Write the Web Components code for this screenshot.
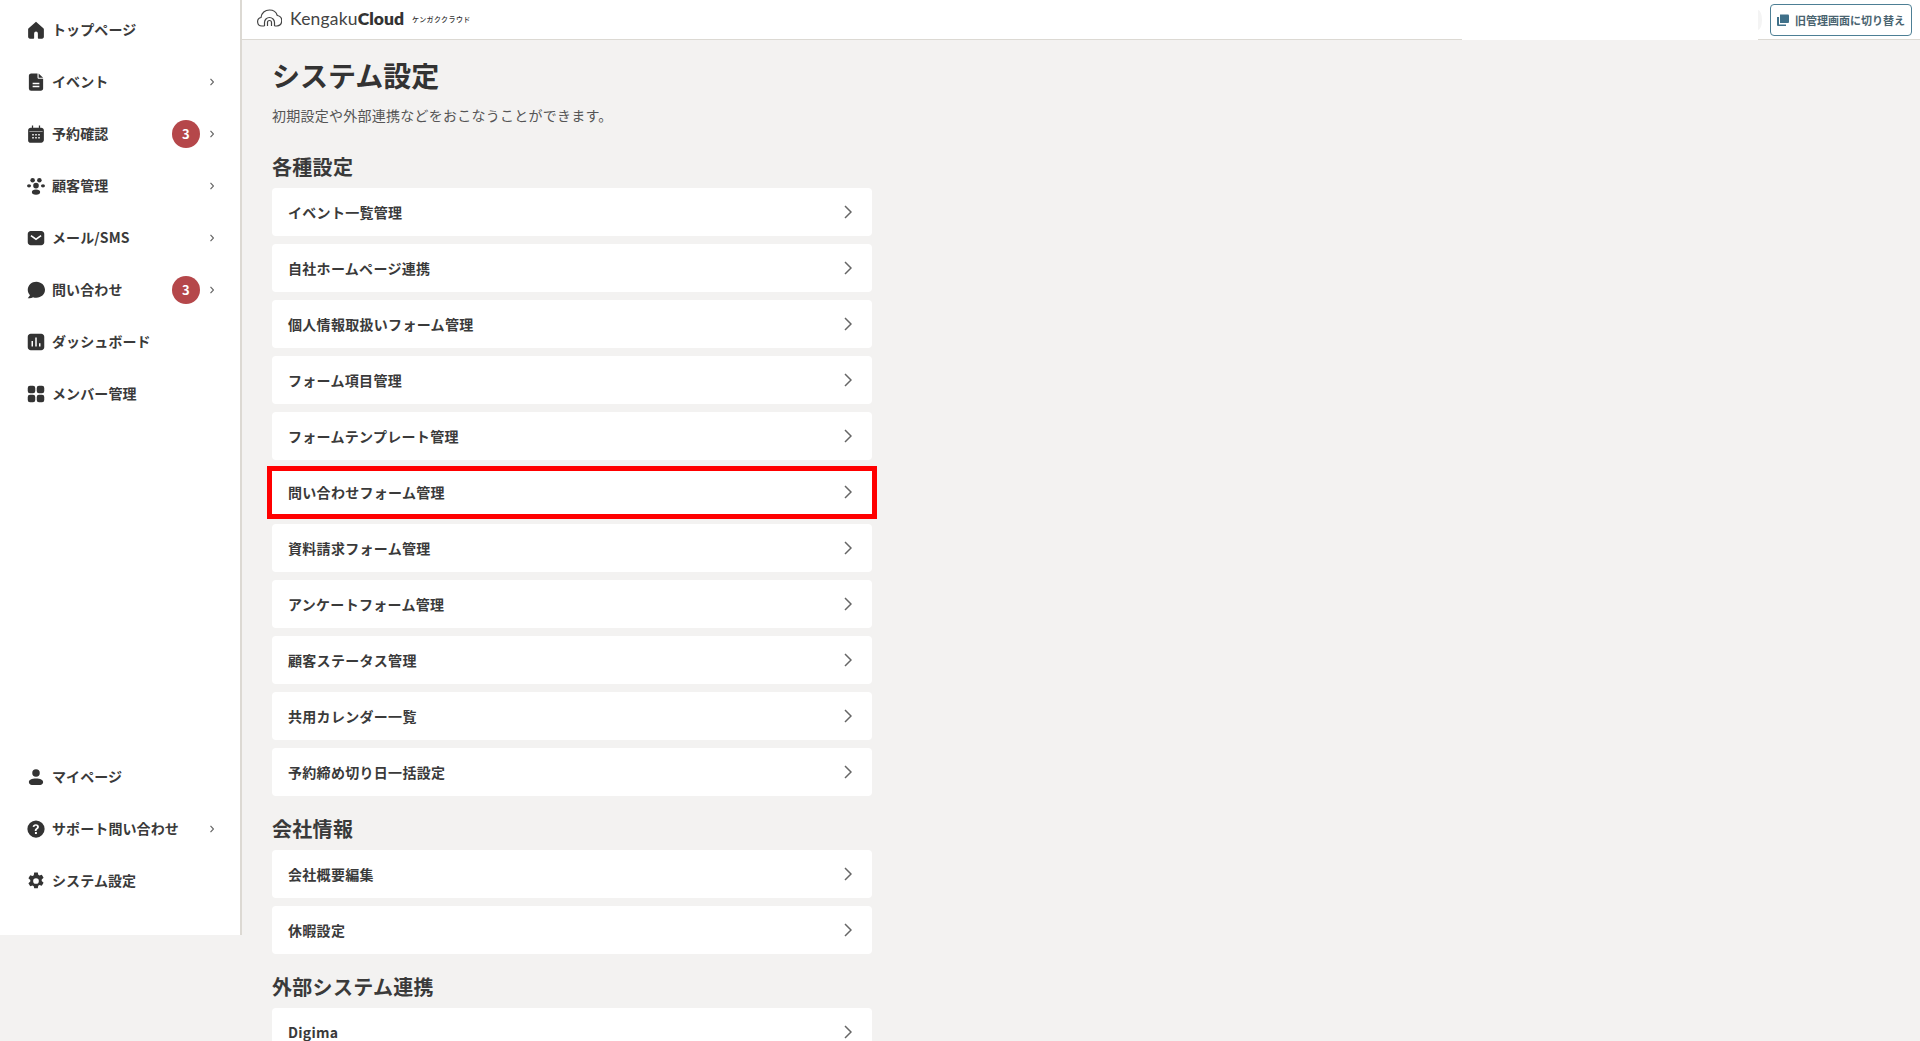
<!DOCTYPE html>
<html lang="ja">
<head>
<meta charset="utf-8">
<title>システム設定</title>
<style>
    html, body { margin: 0; height: 100%; overflow: hidden; background: #f3f2f1; }
    body { font-family: "Noto Sans CJK JP", "Noto Sans", sans-serif; color: #333; }
</style>
</head>
<body>
<kc-app>
    <kc-sidebar slot="side">
        <kc-nav icon="home">トップページ</kc-nav>
        <kc-nav icon="doc" arrow>イベント</kc-nav>
        <kc-nav icon="cal" badge="3" arrow>予約確認</kc-nav>
        <kc-nav icon="people" arrow>顧客管理</kc-nav>
        <kc-nav icon="mail" arrow>メール/SMS</kc-nav>
        <kc-nav icon="chat" badge="3" arrow>問い合わせ</kc-nav>
        <kc-nav icon="chart">ダッシュボード</kc-nav>
        <kc-nav icon="grid">メンバー管理</kc-nav>
        <kc-nav icon="user" slot="bottom">マイページ</kc-nav>
        <kc-nav icon="help" arrow slot="bottom">サポート問い合わせ</kc-nav>
        <kc-nav icon="gear" slot="bottom">システム設定</kc-nav>
    </kc-sidebar>
    <kc-header slot="top"></kc-header>
    <kc-page title="システム設定" lead="初期設定や外部連携などをおこなうことができます。">
        <kc-section heading="各種設定">
            <kc-link>イベント一覧管理</kc-link>
            <kc-link>自社ホームページ連携</kc-link>
            <kc-link>個人情報取扱いフォーム管理</kc-link>
            <kc-link>フォーム項目管理</kc-link>
            <kc-link>フォームテンプレート管理</kc-link>
            <kc-link marked>問い合わせフォーム管理</kc-link>
            <kc-link>資料請求フォーム管理</kc-link>
            <kc-link>アンケートフォーム管理</kc-link>
            <kc-link>顧客ステータス管理</kc-link>
            <kc-link>共用カレンダー一覧</kc-link>
            <kc-link>予約締め切り日一括設定</kc-link>
        </kc-section>
        <kc-section heading="会社情報">
            <kc-link>会社概要編集</kc-link>
            <kc-link>休暇設定</kc-link>
        </kc-section>
        <kc-section heading="外部システム連携">
            <kc-link>Digima</kc-link>
        </kc-section>
    </kc-page>
</kc-app>

<script>
const ICONS = {
    home: '<path d="M12 1 2.200 9.500c-.6.5-.7 1-.7 1.500v10c0 1.500 1 2.500 2.500 2.500h4.500c.6 0 1-.4 1-1v-6a2.500 2.500 0 0 1 5 0v6c0 .6.4 1 1 1H20c1.500 0 2.500-1 2.500-2.500V11c0-.5-.1-1-.7-1.500z"/>',
    doc: '<path fill-rule="evenodd" d="M5.500 .5H14V6c0 1 .8 1.800 1.800 1.800h5.700V20.500c0 1.700-1.300 3-3 3h-13a3 3 0 0 1-3-3v-17c0-1.700 1.300-3 3-3zM7.500 13v2h9v-2zm0 4v2h9v-2z"/><path d="M15.500 .5 21.500 6.300h-6z"/>',
    cal: '<path fill-rule="evenodd" d="M6.500 .5h1.700v3h7.600v-3h1.700v3h1.500c1.900 0 3.500 1.500 3.500 3.500v13c0 1.900-1.600 3.500-3.500 3.500h-13C3.100 24 1.500 22.400 1.500 20.500V7C1.500 5 3.100 3.500 5 3.500h1.500zM3.200 8v.8h17.600V8zM7 12v2h2v-2zm4 0v2h2v-2zm4 0v2h2v-2zM7 16v2h2v-2zm4 0v2h2v-2zm4 0v2h2v-2z"/>',
    people: '<circle cx="7.500" cy="4.200" r="3"/><circle cx="16.500" cy="4.200" r="3"/><ellipse cx="2.700" cy="11.800" rx="2.700" ry="2.200"/><ellipse cx="21.300" cy="11.800" rx="2.700" ry="2.200"/><circle cx="12" cy="11.500" r="3.700"/><ellipse cx="12" cy="20" rx="5.500" ry="3.500"/>',
    mail: '<path fill-rule="evenodd" d="M5 2.500h14c2.200 0 4 1.800 4 4v11c0 2.200-1.800 4-4 4H5c-2.200 0-4-1.800-4-4v-11c0-2.200 1.800-4 4-4zm.9 5.500L4.600 9.800 12 15l7.400-5.200L18.100 8 12 12.300z"/>',
    chat: '<path d="M12.500 1C6.100 1 1 5.700 1 11.800c0 2.800 1.100 5.300 3 7.200L1 23c2.800.2 5.300-.3 7-1.400 1.400.5 2.900.7 4.500.7 6.400 0 11.500-4.500 11.500-10.500S18.900 1 12.500 1z"/>',
    chart: '<path fill-rule="evenodd" d="M5 1h14c2.200 0 4 1.800 4 4v14c0 2.200-1.800 4-4 4H5c-2.200 0-4-1.800-4-4V5c0-2.200 1.800-4 4-4zm6 5v12h2V6zm-5 4.500V18h2v-7.500zm10 3V18h2v-4.500z"/>',
    grid: '<rect x="1" y="1" width="10" height="10" rx="3"/><rect x="13" y="1" width="10" height="10" rx="3"/><rect x="1" y="13" width="10" height="10" rx="3"/><rect x="13" y="13" width="10" height="10" rx="3"/>',
    user: '<circle cx="12" cy="6.500" r="5"/><path d="M12 14c-5.800 0-9.500 1.800-9.500 4.700 0 2.300 1.700 3.800 4 3.800h11c2.300 0 4-1.500 4-3.800 0-2.900-3.700-4.700-9.500-4.700z"/>',
    help: '<path fill-rule="evenodd" d="M12 .5a11.500 11.500 0 1 1 0 23 11.500 11.500 0 0 1 0-23zm-.2 5c-2.500 0-4 1.300-4.300 3.500l2.300.3c.2-1.100.9-1.700 1.900-1.700s1.700.6 1.700 1.500c0 .8-.4 1.200-1.300 1.900-1.200.9-1.700 1.700-1.700 3v.6h2.300v-.4c0-.8.300-1.200 1.200-1.900 1.300-1 2-1.900 2-3.400 0-2.200-1.700-3.400-4.100-3.400zM10.600 16v2.500h2.600V16z"/>',
    gear: '<path fill-rule="evenodd" d="M9.600.5h4.800l.6 3.200 1.600.9 3.100-1 2.400 4.100-2.500 2.200v2.200l2.500 2.200-2.400 4.100-3.100-1-1.600.9-.6 3.200H9.600L9 18.900l-1.600-.9-3.100 1-2.400-4.100 2.500-2.200v-2.200L1.900 8.300l2.400-4.100 3.100 1L9 4.300zM12 8.200a3.800 3.800 0 1 0 0 7.600 3.800 3.800 0 0 0 0-7.600z"/>'
};

class KcApp extends HTMLElement {
    constructor() {
        super();
        this.attachShadow({ mode: 'open' }).innerHTML = `
            <style>
                :host { display: flex; align-items: flex-start; height: 100vh; overflow: hidden; }
                .right { flex: 1; min-width: 0; height: 100vh; overflow: hidden; }
            </style>
            <slot name="side"></slot>
            <div class="right">
                <slot name="top"></slot>
                <slot></slot>
            </div>
        `;
    }
}

class KcSidebar extends HTMLElement {
    constructor() {
        super();
        this.attachShadow({ mode: 'open' }).innerHTML = `
            <style>
                :host {
                    display: flex;
                    flex-direction: column;
                    justify-content: space-between;
                    box-sizing: border-box;
                    width: 242px;
                    flex: none;
                    height: 935px;
                    padding: 3px 0 29px;
                    background: #fff;
                    border-right: 2px solid #dcd9d3;
                }
                nav { display: flex; flex-direction: column; }
            </style>
            <nav><slot></slot></nav>
            <nav><slot name="bottom"></slot></nav>
        `;
    }
}

class KcNav extends HTMLElement {
    constructor() {
        super();
        const badge = this.getAttribute('badge');
        const arrow = this.hasAttribute('arrow');
        this.attachShadow({ mode: 'open' }).innerHTML = `
            <style>
                :host {
                    display: flex;
                    align-items: center;
                    height: 52px;
                    padding: 0 26px 0 27px;
                    font-size: 14px;
                    font-weight: 700;
                    letter-spacing: 0.1px;
                    color: #3a3a3a;
                }
                svg.icon { width: 18px; height: 18px; fill: #333; flex: none; margin: 2px 7px 0 0; }
                .label { flex: 1; white-space: nowrap; }
                .badge {
                    width: 28px; height: 28px; border-radius: 50%;
                    background: #b5474a; color: #fff;
                    display: flex; align-items: center; justify-content: center;
                    font-size: 13px; font-weight: 700; margin: 1px 10px 0 0;
                }
                svg.arrow { width: 4px; height: 8px; margin-top: 1px; fill: none; stroke: #666; stroke-width: 1.200; }
            </style>
            <svg class="icon" viewBox="0 0 24 24">${ICONS[this.getAttribute('icon')]}</svg>
            <span class="label"><slot></slot></span>
            ${badge ? `<span class="badge">${badge}</span>` : ''}
            ${arrow ? '<svg class="arrow" viewBox="0 0 4 8"><path d="M.5 .8l3 3.200-3 3.200"/></svg>' : ''}
        `;
    }
}

class KcHeader extends HTMLElement {
    constructor() {
        super();
        this.attachShadow({ mode: 'open' }).innerHTML = `
            <style>
                :host {
                    display: flex;
                    align-items: center;
                    position: relative;
                    box-sizing: border-box;
                    height: 40px;
                    padding: 0 8px 0 15px;
                    background: #fff;
                    border-bottom: 1px solid #dcd9d3;
                }
                .logo { display: flex; align-items: center; flex: 1; margin-top: -2px; }
                .logo svg { width: 25px; height: 18px; margin: -2px 8px 0 0; fill: none; stroke: #444; stroke-width: 1.200; }
                .name { font-family: Lato, "Noto Sans", sans-serif; font-size: 17.500px; letter-spacing: 0.2px; color: #444; font-weight: 400; }
                .name b { font-weight: 800; color: #333; letter-spacing: 0; }
                .kana { font-size: 7px; font-weight: 500; letter-spacing: 0.400px; margin-left: 8px; color: #333; }
                .patch {
                    position: absolute; top: 0; left: 1220px; width: 296px; height: 40px;
                    background: #fff;
                }
                .patch::after {
                    content: ''; position: absolute; top: 10px; right: -4px; width: 4px; height: 20px;
                    background: #f4f4f4; border-radius: 0 100% 100% 0 / 0 50% 50% 0;
                }
                button {
                    position: relative;
                    display: flex; align-items: center;
                    box-sizing: border-box;
                    width: 142px; height: 32px;
                    margin-top: 0; padding: 0 0 0 6px;
                    background: #fff;
                    border: 1px solid #4d7f95;
                    border-radius: 4px;
                    color: #4a6470;
                    font: 700 11px "Noto Sans CJK JP", sans-serif;
                    white-space: nowrap;
                }
                button svg { width: 12px; height: 12px; fill: #3f7089; margin-right: 6px; flex: none; }
            </style>
            <div class="logo">
                <svg viewBox="0 0 25 18">
                    <path d="M7.500 17H5A4.300 4.300 0 0 1 4 8.500C4.500 4 8 1 12.500 1c3.800 0 6.800 2.300 7.800 5.500A5.300 5.300 0 0 1 20 17h-2.500"/>
                    <path d="M7.500 17v-3.500a5 5 0 0 1 10 0V17M10.500 17v-3.500a2 2 0 0 1 4 0V17"/>
                </svg>
                <span class="name">Kengaku<b>Cloud</b></span>
                <span class="kana">ケンガククラウド</span>
            </div>
            <div class="patch"></div>
            <button>
                <svg viewBox="0 0 12 12"><path d="M3 .5h8a1 1 0 0 1 1 1V8a1 1 0 0 1-1 1H3z"/><path d="M0 3h2v7.500H9V12H1a1 1 0 0 1-1-1z"/></svg>
                旧管理画面に切り替え
            </button>
        `;
    }
}

class KcPage extends HTMLElement {
    constructor() {
        super();
        this.attachShadow({ mode: 'open' }).innerHTML = `
            <style>
                :host { display: block; padding: 15px 0 0 30px; width: 600px; }
                h1 { margin: 0; font-size: 28px; line-height: 40px; font-weight: 700; color: #333; }
                p { margin: 10px 0 26px; font-size: 14px; line-height: 21px; letter-spacing: 0.25px; color: #555; }
            </style>
            <h1>${this.getAttribute('title')}</h1>
            <p>${this.getAttribute('lead')}</p>
            <slot></slot>
        `;
        this.removeAttribute('title');
    }
}

class KcSection extends HTMLElement {
    constructor() {
        super();
        this.attachShadow({ mode: 'open' }).innerHTML = `
            <style>
                :host { display: flex; flex-direction: column; gap: 8px; margin-bottom: 18px; }
                h2 { margin: 0 0 -1px; font-size: 20px; line-height: 29px; font-weight: 700; letter-spacing: 0.3px; color: #3a3a3a; }
            </style>
            <h2>${this.getAttribute('heading')}</h2>
            <slot></slot>
        `;
    }
}

class KcLink extends HTMLElement {
    constructor() {
        super();
        this.attachShadow({ mode: 'open' }).innerHTML = `
            <style>
                :host {
                    display: flex; align-items: center; justify-content: space-between;
                    position: relative;
                    height: 48px;
                    padding: 0 20px 0 16px;
                    background: #fff;
                    border-radius: 4px;
                    font-size: 14px;
                    font-weight: 700;
                    letter-spacing: 0.3px;
                    color: #3a3a3a;
                }
                span { margin-top: -1px; }
                svg { width: 8px; height: 14px; margin-top: -1px; fill: none; stroke: #666; stroke-width: 1.500; }
                :host([marked])::after {
                    content: ''; position: absolute; inset: -2px -5px -3px;
                    border: 5px solid #f00;
                }
            </style>
            <span><slot></slot></span>
            <svg viewBox="0 0 8 14"><path d="M1 1l6 6-6 6"/></svg>
        `;
    }
}

customElements.define('kc-app', KcApp);
customElements.define('kc-sidebar', KcSidebar);
customElements.define('kc-nav', KcNav);
customElements.define('kc-header', KcHeader);
customElements.define('kc-page', KcPage);
customElements.define('kc-section', KcSection);
customElements.define('kc-link', KcLink);
</script>
</body>
</html>
